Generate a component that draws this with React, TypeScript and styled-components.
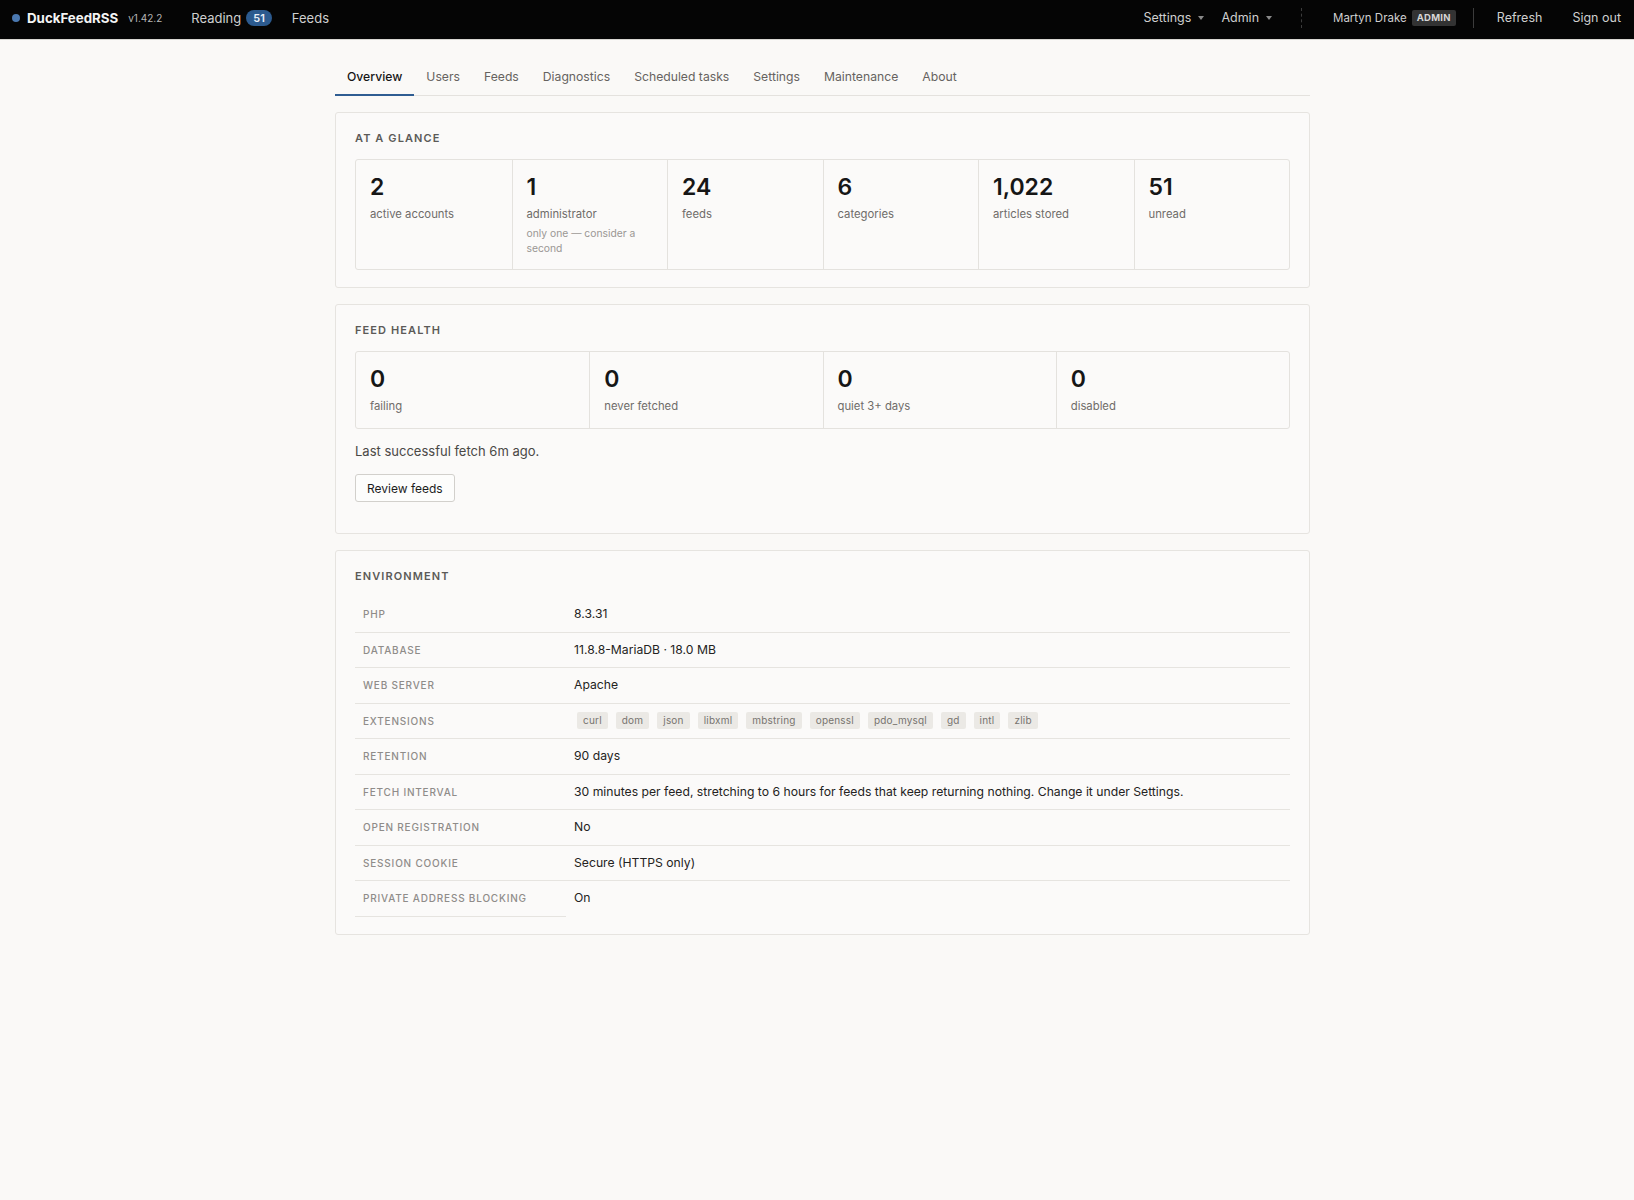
import styled, { createGlobalStyle } from "styled-components";

const GlobalStyle = createGlobalStyle`
  html, body {
    margin: 0;
    padding: 0;
    background: #faf9f7;
    font-family: Inter, "Noto Sans", "Liberation Sans", sans-serif;
    color: #1c1c1c;
  }
  * { box-sizing: border-box; }
`;

const TopBar = styled.header`
  height: 40px;
  background: #050505;
  border-bottom: 1px solid #d8d6d2;
  display: flex;
  align-items: center;
  justify-content: space-between;
  padding: 0 13px 4px 12px;
  font-size: 13px;
`;

const BarGroup = styled.div`
  display: flex;
  align-items: center;
`;

const Brand = styled.div`
  display: flex;
  align-items: center;
  gap: 7px;
  margin-right: 29px;
`;

const Dot = styled.span`
  width: 8px;
  height: 8px;
  border-radius: 50%;
  background: #4a78b0;
`;

const BrandName = styled.span`
  color: #f4f4f4;
  font-weight: 700;
  font-size: 13.3px;
`;

const Version = styled.span`
  color: #b5b5b5;
  font-size: 10px;
  margin-left: 3px;
`;

const NavLink = styled.span<{ $gap?: number; $small?: boolean }>`
  color: #cfcfcf;
  font-size: ${({ $small }) => ($small ? 12.5 : 13)}px;
  display: flex;
  align-items: center;
  gap: 5px;
  margin-right: ${({ $gap }) => $gap ?? 0}px;
`;

const CountBadge = styled.span`
  background: #2c5a8e;
  color: #e8eef6;
  font-size: 11px;
  font-weight: 600;
  border-radius: 9px;
  padding: 1px 7px;
  line-height: 14px;
`;

const Caret = styled.span`
  width: 0;
  height: 0;
  border-left: 3px solid transparent;
  border-right: 3px solid transparent;
  border-top: 4px solid #8a8a8a;
  margin-left: 2px;
`;

const Divider = styled.span<{ $dashed?: boolean; $left: number; $right: number }>`
  width: 0;
  height: 20px;
  border-left: 1px ${({ $dashed }) => ($dashed ? "dashed" : "solid")} #3c3c3c;
  margin: 0 ${({ $right }) => $right}px 0 ${({ $left }) => $left}px;
`;

const UserName = styled.span`
  color: #cfcfcf;
  font-size: 11.5px;
  display: flex;
  align-items: center;
  gap: 5px;
`;

const RoleBadge = styled.span`
  background: #333333;
  color: #d6d6d6;
  font-size: 9.5px;
  font-weight: 700;
  letter-spacing: 0.03em;
  padding: 1px 5px;
  border-radius: 2px;
  line-height: 14px;
`;

const Main = styled.main`
  padding: 20px 0 40px 11px;
`;

const Container = styled.div`
  width: 975px;
  margin: 0 auto;
`;

const Tabs = styled.nav`
  display: flex;
  border-bottom: 1px solid #e4e2de;
  margin-bottom: 16px;
`;

const Tab = styled.span<{ $active?: boolean }>`
  font-size: 12.2px;
  line-height: 18px;
  padding: 8px 12px 8px;
  margin-bottom: -1px;
  color: ${({ $active }) => ($active ? "#151515" : "#666360")};
  font-weight: ${({ $active }) => ($active ? 500 : 400)};
  border-bottom: 2px solid ${({ $active }) => ($active ? "#2f5d92" : "transparent")};
`;

const Card = styled.section<{ $extra?: number }>`
  background: #fbfaf9;
  border: 1px solid #e6e4e0;
  border-radius: 3px;
  padding: 19px 19px ${({ $extra }) => 17 + ($extra ?? 0)}px;
  margin-bottom: 16px;
`;

const CardTitle = styled.h2`
  margin: 0 0 15px;
  font-size: 11px;
  line-height: 12px;
  font-weight: 600;
  letter-spacing: 0.1em;
  text-transform: uppercase;
  color: #5c5a58;
`;

const StatGrid = styled.div<{ $cols: number }>`
  display: grid;
  grid-template-columns: repeat(${({ $cols }) => $cols}, 1fr);
  border: 1px solid #e4e2de;
  border-radius: 3px;
`;

const Stat = styled.div`
  padding: 13px 14px;
  border-left: 1px solid #e4e2de;
  &:first-child {
    border-left: none;
  }
`;

const StatValue = styled.div`
  font-size: 23px;
  line-height: 28px;
  font-weight: 600;
  color: #161616;
`;

const StatLabel = styled.div`
  margin-top: 5px;
  font-size: 11.3px;
  line-height: 17px;
  color: #6f6c69;
`;

const StatNote = styled.div`
  margin-top: 3px;
  font-size: 10.3px;
  line-height: 15px;
  color: #9a9794;
  max-width: 120px;
`;

const Note = styled.p`
  margin: 12px 0 13px;
  font-size: 13px;
  line-height: 20px;
  color: #4a4846;
`;

const Button = styled.button`
  font-family: inherit;
  font-size: 12px;
  color: #1c1c1c;
  background: #fdfdfc;
  border: 1px solid #d2d0cc;
  border-radius: 3px;
  height: 28px;
  padding: 0 11px;
`;

const EnvTable = styled.table`
  width: 100%;
  border-collapse: collapse;
`;

const EnvKey = styled.th`
  width: 211px;
  text-align: left;
  font-size: 10px;
  font-weight: 500;
  letter-spacing: 0.08em;
  text-transform: uppercase;
  color: #8f8c89;
  padding: 8px 8px;
  line-height: 18.5px;
  border-bottom: 1px solid #e6e4e0;
  vertical-align: middle;
`;

const EnvValue = styled.td`
  font-size: 12.2px;
  color: #242322;
  padding: 8px 8px;
  line-height: 18.5px;
  border-bottom: 1px solid #e6e4e0;
  vertical-align: middle;
  tr:last-child & {
    border-bottom: none;
  }
`;

const TagList = styled.div`
  display: flex;
  gap: 8px;
  padding-left: 3px;
`;

const Tag = styled.span`
  background: #ebe9e5;
  color: #77746f;
  font-size: 10px;
  letter-spacing: 0.02em;
  line-height: 13px;
  padding: 2px 6px;
  border-radius: 2px;
`;

const tabs = ["Overview", "Users", "Feeds", "Diagnostics", "Scheduled tasks", "Settings", "Maintenance", "About"];

const glance = [
  { value: "2", label: "active accounts" },
  { value: "1", label: "administrator", note: "only one — consider a second" },
  { value: "24", label: "feeds" },
  { value: "6", label: "categories" },
  { value: "1,022", label: "articles stored" },
  { value: "51", label: "unread" },
];

const health = [
  { value: "0", label: "failing" },
  { value: "0", label: "never fetched" },
  { value: "0", label: "quiet 3+ days" },
  { value: "0", label: "disabled" },
];

const extensions = ["curl", "dom", "json", "libxml", "mbstring", "openssl", "pdo_mysql", "gd", "intl", "zlib"];

const environment: { key: string; value: string | string[] }[] = [
  { key: "PHP", value: "8.3.31" },
  { key: "Database", value: "11.8.8-MariaDB · 18.0 MB" },
  { key: "Web server", value: "Apache" },
  { key: "Extensions", value: extensions },
  { key: "Retention", value: "90 days" },
  {
    key: "Fetch interval",
    value:
      "30 minutes per feed, stretching to 6 hours for feeds that keep returning nothing. Change it under Settings.",
  },
  { key: "Open registration", value: "No" },
  { key: "Session cookie", value: "Secure (HTTPS only)" },
  { key: "Private address blocking", value: "On" },
];

const App: React.FC = () => {
  return (
    <>
      <GlobalStyle />
      <TopBar>
        <BarGroup>
          <Brand>
            <Dot />
            <BrandName>DuckFeedRSS</BrandName>
            <Version>v1.42.2</Version>
          </Brand>
          <NavLink $gap={20}>
            Reading <CountBadge>51</CountBadge>
          </NavLink>
          <NavLink>Feeds</NavLink>
        </BarGroup>
        <BarGroup>
          <NavLink $small $gap={17}>
            Settings<Caret />
          </NavLink>
          <NavLink $small>
            Admin<Caret />
          </NavLink>
          <Divider $dashed $left={29} $right={31} />
          <UserName>
            Martyn Drake <RoleBadge>ADMIN</RoleBadge>
          </UserName>
          <Divider $left={17} $right={23} />
          <NavLink $small $gap={30}>
            Refresh
          </NavLink>
          <NavLink $small>Sign out</NavLink>
        </BarGroup>
      </TopBar>
      <Main>
        <Container>
          <Tabs>
            {tabs.map((t, i) => (
              <Tab key={t} $active={i === 0}>
                {t}
              </Tab>
            ))}
          </Tabs>

          <Card>
            <CardTitle>At a glance</CardTitle>
            <StatGrid $cols={6}>
              {glance.map((s) => (
                <Stat key={s.label}>
                  <StatValue>{s.value}</StatValue>
                  <StatLabel>{s.label}</StatLabel>
                  {s.note && <StatNote>{s.note}</StatNote>}
                </Stat>
              ))}
            </StatGrid>
          </Card>

          <Card $extra={14}>
            <CardTitle>Feed health</CardTitle>
            <StatGrid $cols={4}>
              {health.map((s) => (
                <Stat key={s.label}>
                  <StatValue>{s.value}</StatValue>
                  <StatLabel>{s.label}</StatLabel>
                </Stat>
              ))}
            </StatGrid>
            <Note>Last successful fetch 6m ago.</Note>
            <Button>Review feeds</Button>
          </Card>

          <Card>
            <CardTitle>Environment</CardTitle>
            <EnvTable>
              <tbody>
                {environment.map((row) => (
                  <tr key={row.key}>
                    <EnvKey>{row.key}</EnvKey>
                    <EnvValue>
                      {Array.isArray(row.value) ? (
                        <TagList>
                          {row.value.map((t) => (
                            <Tag key={t}>{t}</Tag>
                          ))}
                        </TagList>
                      ) : (
                        row.value
                      )}
                    </EnvValue>
                  </tr>
                ))}
              </tbody>
            </EnvTable>
          </Card>
        </Container>
      </Main>
    </>
  );
};

export default App;
